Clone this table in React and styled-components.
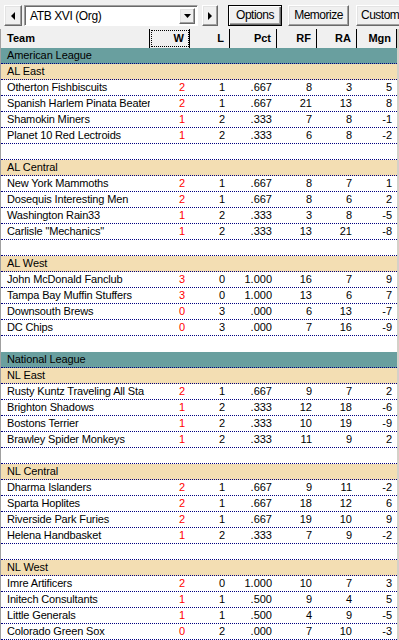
import React from 'react';
import styled, { createGlobalStyle, css } from 'styled-components';

const GlobalStyle = createGlobalStyle`
	html, body {
		margin: 0;
		padding: 0;
		background: #f0f0f0;
	}
	body {
		font-family: "Liberation Sans", Arial, sans-serif;
		font-size: 11px;
		color: #000;
	}
`;

const COLS = '149px 40px 40px 47px 40px 40px 40px';

const Window = styled.div`
	width: 399px;
	height: 640px;
	overflow: hidden;
	background: #f0f0f0;
`;

const Toolbar = styled.div`
	display: flex;
	align-items: center;
	height: 29px;
	box-sizing: border-box;
	padding: 5px 0 3px 4px;
	white-space: nowrap;
	overflow: hidden;
`;

const raised = css`
	box-sizing: border-box;
	background: #f0f0f0;
	border: 1px solid;
	border-color: #fff #696969 #696969 #fff;
	box-shadow: inset -1px -1px 0 #a0a0a0, inset 1px 1px 0 #e3e3e3;
`;

const NavButton = styled.div`
	${raised};
	flex: none;
	width: ${p => p.$w || 18}px;
	height: 21px;
	margin-right: ${p => p.$gap || 0}px;
	display: flex;
	align-items: center;
	justify-content: center;
`;

const Select = styled.div`
	flex: none;
	display: flex;
	width: 174px;
	height: 21px;
	box-sizing: border-box;
	margin-right: 4px;
	background: #fff;
	border: 1px solid;
	border-color: #a0a0a0 #fff #fff #a0a0a0;
	box-shadow: inset 1px 1px 0 #696969;
	padding: 2px 2px 1px 2px;
`;

const SelectText = styled.div`
	flex: 1;
	font-size: 12px;
	line-height: 16px;
	padding-left: 3px;
	letter-spacing: -0.4px;
`;

const DropButton = styled.div`
	${raised};
	width: 16px;
	height: 16px;
	display: flex;
	align-items: center;
	justify-content: center;
`;

const Button = styled.div`
	${raised};
	flex: none;
	height: 21px;
	width: ${p => p.$w}px;
	margin-right: ${p => p.$gap || 0}px;
	padding-left: ${p => p.$pad || 0}px;
	font-size: 12px;
	line-height: 18px;
	text-align: ${p => (p.$pad ? 'left' : 'center')};
	letter-spacing: -0.5px;
	${p => p.$default && css`
		border-color: #000;
		box-shadow: inset 1px 1px 0 #fff, inset -1px -1px 0 #696969, inset -2px -2px 0 #a0a0a0;
	`}
`;

const Grid = styled.div`
	width: 399px;
	box-sizing: border-box;
	border-left: 1px solid #a0a0a0;
	border-right: 2px solid #d4d0c8;
	background: #fff;
`;

const HeaderRow = styled.div`
	display: grid;
	grid-template-columns: ${COLS};
	height: 19px;
	background: #f0f0f0;
`;

const HeaderCell = styled.div`
	box-sizing: border-box;
	height: 19px;
	line-height: 18px;
	font-weight: bold;
	padding: 0 5px 0 6px;
	text-align: ${p => (p.$left ? 'left' : 'right')};
	border-right: 1px solid #000;
	${p => p.$focus && css`
		outline: 1px dotted #000;
		outline-offset: -2px;
	`}
`;

const Row = styled.div`
	display: grid;
	grid-template-columns: ${COLS};
	height: 16px;
	box-sizing: border-box;
	line-height: 15px;
	background: #fff;
	border-bottom: 1px dotted #000080;
`;

const Cell = styled.div`
	padding: ${p => (p.$left ? '0 0 0 6px' : '0 5px 0 0')};
	text-align: ${p => (p.$left ? 'left' : 'right')};
	letter-spacing: ${p => (p.$left ? '-0.15px' : '0')};
	color: ${p => p.$color || '#000'};
	white-space: nowrap;
	overflow: hidden;
`;

const Band = styled.div`
	height: 16px;
	box-sizing: border-box;
	line-height: 15px;
	padding-left: 6px;
	letter-spacing: -0.1px;
	background: ${p => (p.$league ? '#699f9f' : '#f3deb3')};
	border-bottom: 1px dotted #000080;
`;

const Spacer = styled.div`
	height: 16px;
	box-sizing: border-box;
	background: #fff;
	border-bottom: ${p => (p.$plain ? 'none' : '1px dotted #000080')};
`;

const Tri = ({ dir }) => {
	const pts = {
		left: '4,0 4,8 0,4',
		right: '0,0 0,8 4,4',
		down: '0,0 7,0 3.5,4',
	}[dir];
	const w = dir === 'down' ? 7 : 4;
	const h = dir === 'down' ? 4 : 8;
	return (
		<svg width={w} height={h} viewBox={`0 0 ${w} ${h}`}>
			<polygon points={pts} fill="#000" />
		</svg>
	);
};

const leagues = [
	{
		name: 'American League',
		divisions: [
			{
				name: 'AL East',
				teams: [
					['Otherton Fishbiscuits', 2, 1, '.667', 8, 3, 5],
					['Spanish Harlem Pinata Beater', 2, 1, '.667', 21, 13, 8],
					['Shamokin Miners', 1, 2, '.333', 7, 8, -1],
					['Planet 10 Red Lectroids', 1, 2, '.333', 6, 8, -2],
				],
			},
			{
				name: 'AL Central',
				teams: [
					['New York Mammoths', 2, 1, '.667', 8, 7, 1],
					['Dosequis Interesting Men', 2, 1, '.667', 8, 6, 2],
					['Washington Rain33', 1, 2, '.333', 3, 8, -5],
					['Carlisle "Mechanics"', 1, 2, '.333', 13, 21, -8],
				],
			},
			{
				name: 'AL West',
				teams: [
					['John McDonald Fanclub', 3, 0, '1.000', 16, 7, 9],
					['Tampa Bay Muffin Stuffers', 3, 0, '1.000', 13, 6, 7],
					['Downsouth Brews', 0, 3, '.000', 6, 13, -7],
					['DC Chips', 0, 3, '.000', 7, 16, -9],
				],
			},
		],
	},
	{
		name: 'National League',
		divisions: [
			{
				name: 'NL East',
				teams: [
					['Rusty Kuntz Traveling All Sta', 2, 1, '.667', 9, 7, 2],
					['Brighton Shadows', 1, 2, '.333', 12, 18, -6],
					['Bostons Terrier', 1, 2, '.333', 10, 19, -9],
					['Brawley Spider Monkeys', 1, 2, '.333', 11, 9, 2],
				],
			},
			{
				name: 'NL Central',
				teams: [
					['Dharma Islanders', 2, 1, '.667', 9, 11, -2],
					['Sparta Hoplites', 2, 1, '.667', 18, 12, 6],
					['Riverside Park Furies', 2, 1, '.667', 19, 10, 9],
					['Helena Handbasket', 1, 2, '.333', 7, 9, -2],
				],
			},
			{
				name: 'NL West',
				teams: [
					['Imre Artificers', 2, 0, '1.000', 10, 7, 3],
					['Initech Consultants', 1, 1, '.500', 9, 4, 5],
					['Little Generals', 1, 1, '.500', 4, 9, -5],
					['Colorado Green Sox', 0, 2, '.000', 7, 10, -3],
				],
			},
		],
	},
];

function TeamRow({ team }) {
	const [name, w, l, pct, rf, ra, mgn] = team;
	return (
		<Row>
			<Cell $left>{name}</Cell>
			<Cell $color="#ff0000">{w}</Cell>
			<Cell>{l}</Cell>
			<Cell>{pct}</Cell>
			<Cell>{rf}</Cell>
			<Cell>{ra}</Cell>
			<Cell>{mgn}</Cell>
		</Row>
	);
}

export default function App() {
	return (
		<Window>
			<GlobalStyle />
			<Toolbar>
				<NavButton $gap={2}><Tri dir="left" /></NavButton>
				<Select>
					<SelectText>ATB XVI (Org)</SelectText>
					<DropButton><Tri dir="down" /></DropButton>
				</Select>
				<NavButton $w={16} $gap={10}><Tri dir="right" /></NavButton>
				<Button $w={54} $gap={6} $default>Options</Button>
				<Button $w={61} $gap={7}>Memorize</Button>
				<Button $w={56} $pad={4}>Custom</Button>
			</Toolbar>
			<Grid>
				<HeaderRow>
					<HeaderCell $left>Team</HeaderCell>
					<HeaderCell $focus>W</HeaderCell>
					<HeaderCell>L</HeaderCell>
					<HeaderCell>Pct</HeaderCell>
					<HeaderCell>RF</HeaderCell>
					<HeaderCell>RA</HeaderCell>
					<HeaderCell>Mgn</HeaderCell>
				</HeaderRow>
				{leagues.map((league, li) => (
					<React.Fragment key={league.name}>
						<Band $league>{league.name}</Band>
						{league.divisions.map((div, di) => (
							<React.Fragment key={div.name}>
								<Band>{div.name}</Band>
								{div.teams.map(t => (
									<TeamRow key={t[0]} team={t} />
								))}
								{!(li === leagues.length - 1 && di === league.divisions.length - 1) && (
									<Spacer $plain={di === league.divisions.length - 1} />
								)}
							</React.Fragment>
						))}
					</React.Fragment>
				))}
			</Grid>
		</Window>
	);
}
